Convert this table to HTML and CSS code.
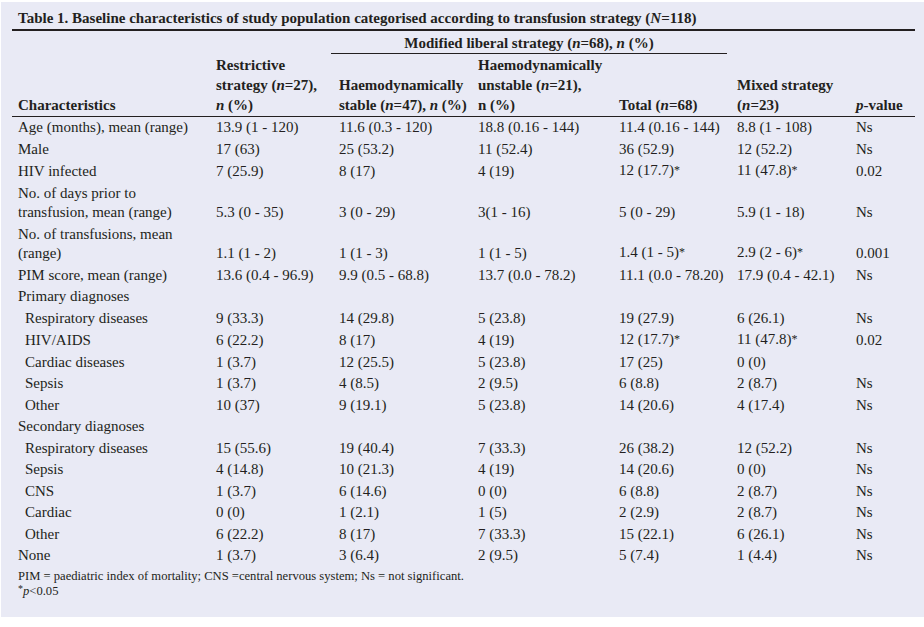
FILE: index.html
```html
<!DOCTYPE html>
<html lang="en">
<head>
<meta charset="utf-8">
<title>Table 1</title>
<link rel="stylesheet" href="styles.css">
</head>
<body>
<div class="sheet">
  <div class="title">Table 1. Baseline characteristics of study population categorised according to transfusion strategy (<i>N</i>=118)</div>
  <table class="tbl">
    <colgroup>
      <col class="c1"><col class="c2"><col class="c3"><col class="c4"><col class="c5"><col class="c6"><col class="c7">
    </colgroup>
    <thead>
      <tr class="group-row">
        <th></th><th></th>
        <th colspan="3" class="group"><div class="group-label">Modified liberal strategy (<i>n</i>=68), <i>n</i> (%)</div></th>
        <th></th><th></th>
      </tr>
      <tr class="head-row">
        <th>Characteristics</th>
        <th>Restrictive<br>strategy (<i>n</i>=27),<br><i>n</i> (%)</th>
        <th>Haemodynamically<br>stable (<i>n</i>=47), <i>n</i> (%)</th>
        <th>Haemodynamically<br>unstable (<i>n</i>=21),<br>n (%)</th>
        <th>Total (<i>n</i>=68)</th>
        <th>Mixed strategy<br>(<i>n</i>=23)</th>
        <th><i>p</i>-value</th>
      </tr>
    </thead>
    <tbody>
      <tr><td>Age (months), mean (range)</td><td>13.9 (1 - 120)</td><td>11.6 (0.3 - 120)</td><td>18.8 (0.16 - 144)</td><td>11.4 (0.16 - 144)</td><td>8.8 (1 - 108)</td><td>Ns</td></tr>
      <tr><td>Male</td><td>17 (63)</td><td>25 (53.2)</td><td>11 (52.4)</td><td>36 (52.9)</td><td>12 (52.2)</td><td>Ns</td></tr>
      <tr><td>HIV infected</td><td>7 (25.9)</td><td>8 (17)</td><td>4 (19)</td><td>12 (17.7)<span class="ast">*</span></td><td>11 (47.8)<span class="ast">*</span></td><td>0.02</td></tr>
      <tr><td>No. of days prior to<br>transfusion, mean (range)</td><td>5.3 (0 - 35)</td><td>3 (0 - 29)</td><td>3(1 - 16)</td><td>5 (0 - 29)</td><td>5.9 (1 - 18)</td><td>Ns</td></tr>
      <tr><td>No. of transfusions, mean<br>(range)</td><td>1.1 (1 - 2)</td><td>1 (1 - 3)</td><td>1 (1 - 5)</td><td>1.4 (1 - 5)<span class="ast">*</span></td><td>2.9 (2 - 6)<span class="ast">*</span></td><td>0.001</td></tr>
      <tr><td>PIM score, mean (range)</td><td>13.6 (0.4 - 96.9)</td><td>9.9 (0.5 - 68.8)</td><td>13.7 (0.0 - 78.2)</td><td>11.1 (0.0 - 78.20)</td><td>17.9 (0.4 - 42.1)</td><td>Ns</td></tr>
      <tr><td>Primary diagnoses</td><td></td><td></td><td></td><td></td><td></td><td></td></tr>
      <tr><td class="sub">Respiratory diseases</td><td>9 (33.3)</td><td>14 (29.8)</td><td>5 (23.8)</td><td>19 (27.9)</td><td>6 (26.1)</td><td>Ns</td></tr>
      <tr><td class="sub">HIV/AIDS</td><td>6 (22.2)</td><td>8 (17)</td><td>4 (19)</td><td>12 (17.7)<span class="ast">*</span></td><td>11 (47.8)<span class="ast">*</span></td><td>0.02</td></tr>
      <tr><td class="sub">Cardiac diseases</td><td>1 (3.7)</td><td>12 (25.5)</td><td>5 (23.8)</td><td>17 (25)</td><td>0 (0)</td><td></td></tr>
      <tr><td class="sub">Sepsis</td><td>1 (3.7)</td><td>4 (8.5)</td><td>2 (9.5)</td><td>6 (8.8)</td><td>2 (8.7)</td><td>Ns</td></tr>
      <tr><td class="sub">Other</td><td>10 (37)</td><td>9 (19.1)</td><td>5 (23.8)</td><td>14 (20.6)</td><td>4 (17.4)</td><td>Ns</td></tr>
      <tr><td>Secondary diagnoses</td><td></td><td></td><td></td><td></td><td></td><td></td></tr>
      <tr><td class="sub">Respiratory diseases</td><td>15 (55.6)</td><td>19 (40.4)</td><td>7 (33.3)</td><td>26 (38.2)</td><td>12 (52.2)</td><td>Ns</td></tr>
      <tr><td class="sub">Sepsis</td><td>4 (14.8)</td><td>10 (21.3)</td><td>4 (19)</td><td>14 (20.6)</td><td>0 (0)</td><td>Ns</td></tr>
      <tr><td class="sub">CNS</td><td>1 (3.7)</td><td>6 (14.6)</td><td>0 (0)</td><td>6 (8.8)</td><td>2 (8.7)</td><td>Ns</td></tr>
      <tr><td class="sub">Cardiac</td><td>0 (0)</td><td>1 (2.1)</td><td>1 (5)</td><td>2 (2.9)</td><td>2 (8.7)</td><td>Ns</td></tr>
      <tr><td class="sub">Other</td><td>6 (22.2)</td><td>8 (17)</td><td>7 (33.3)</td><td>15 (22.1)</td><td>6 (26.1)</td><td>Ns</td></tr>
      <tr><td>None</td><td>1 (3.7)</td><td>3 (6.4)</td><td>2 (9.5)</td><td>5 (7.4)</td><td>1 (4.4)</td><td>Ns</td></tr>
    </tbody>
  </table>
  <div class="notes">
    <p>PIM = paediatric index of mortality; CNS =central nervous system; Ns = not significant.</p>
    <p><span class="note-ast">*</span><i>p</i>&lt;0.05</p>
  </div>
</div>
</body>
</html>
```
FILE: styles.css
```css
html, body {
  margin: 0;
  padding: 0;
  background: #ffffff;
}

body {
  font-family: "Liberation Serif", "Times New Roman", serif;
  color: #231f20;
}

.sheet {
  margin: 2px 0 0 1px;
  width: 923px;
  height: 615px;
  background: #e9eaf5;
  padding: 6px 0 0 11px;
  box-sizing: border-box;
}

.title {
  width: 903px;
  box-sizing: border-box;
  padding: 0 0 1px 6px;
  font-weight: bold;
  font-size: 15px;
  line-height: 20px;
  border-bottom: 2px solid #231f20;
}

.tbl {
  width: 903px;
  table-layout: fixed;
  border-collapse: collapse;
  font-size: 15px;
}

.c1 { width: 198px; }
.c2 { width: 123px; }
.c3 { width: 139px; }
.c4 { width: 141px; }
.c5 { width: 118px; }
.c6 { width: 119px; }
.c7 { width: 65px; }

.tbl th {
  font-weight: bold;
  text-align: left;
  vertical-align: bottom;
  line-height: 20px;
  padding: 1px 0 1px 6px;
}

.group-row th {
  padding: 2px 0 0 0;
}

.group-row .group {
  text-align: center;
}

.group-label {
  margin: 0 4px 0 -2px;
  border-bottom: 1px solid #231f20;
}

.head-row th {
  border-bottom: 1px solid #231f20;
  padding-top: 1px;
  padding-bottom: 1px;
}

.tbl td {
  vertical-align: bottom;
  line-height: 19.5px;
  padding: 1px 0 1px 6px;
  white-space: nowrap;
}

.tbl td.sub {
  padding-left: 13px;
}

.ast {
  font-size: 12px;
  position: relative;
  top: -1px;
}

.notes {
  padding: 2px 0 0 6px;
  font-size: 12.6px;
  line-height: 15px;
}

.notes p {
  margin: 0;
  height: 15px;
}

.note-ast {
  font-size: 10px;
  position: relative;
  top: -3px;
}
```
